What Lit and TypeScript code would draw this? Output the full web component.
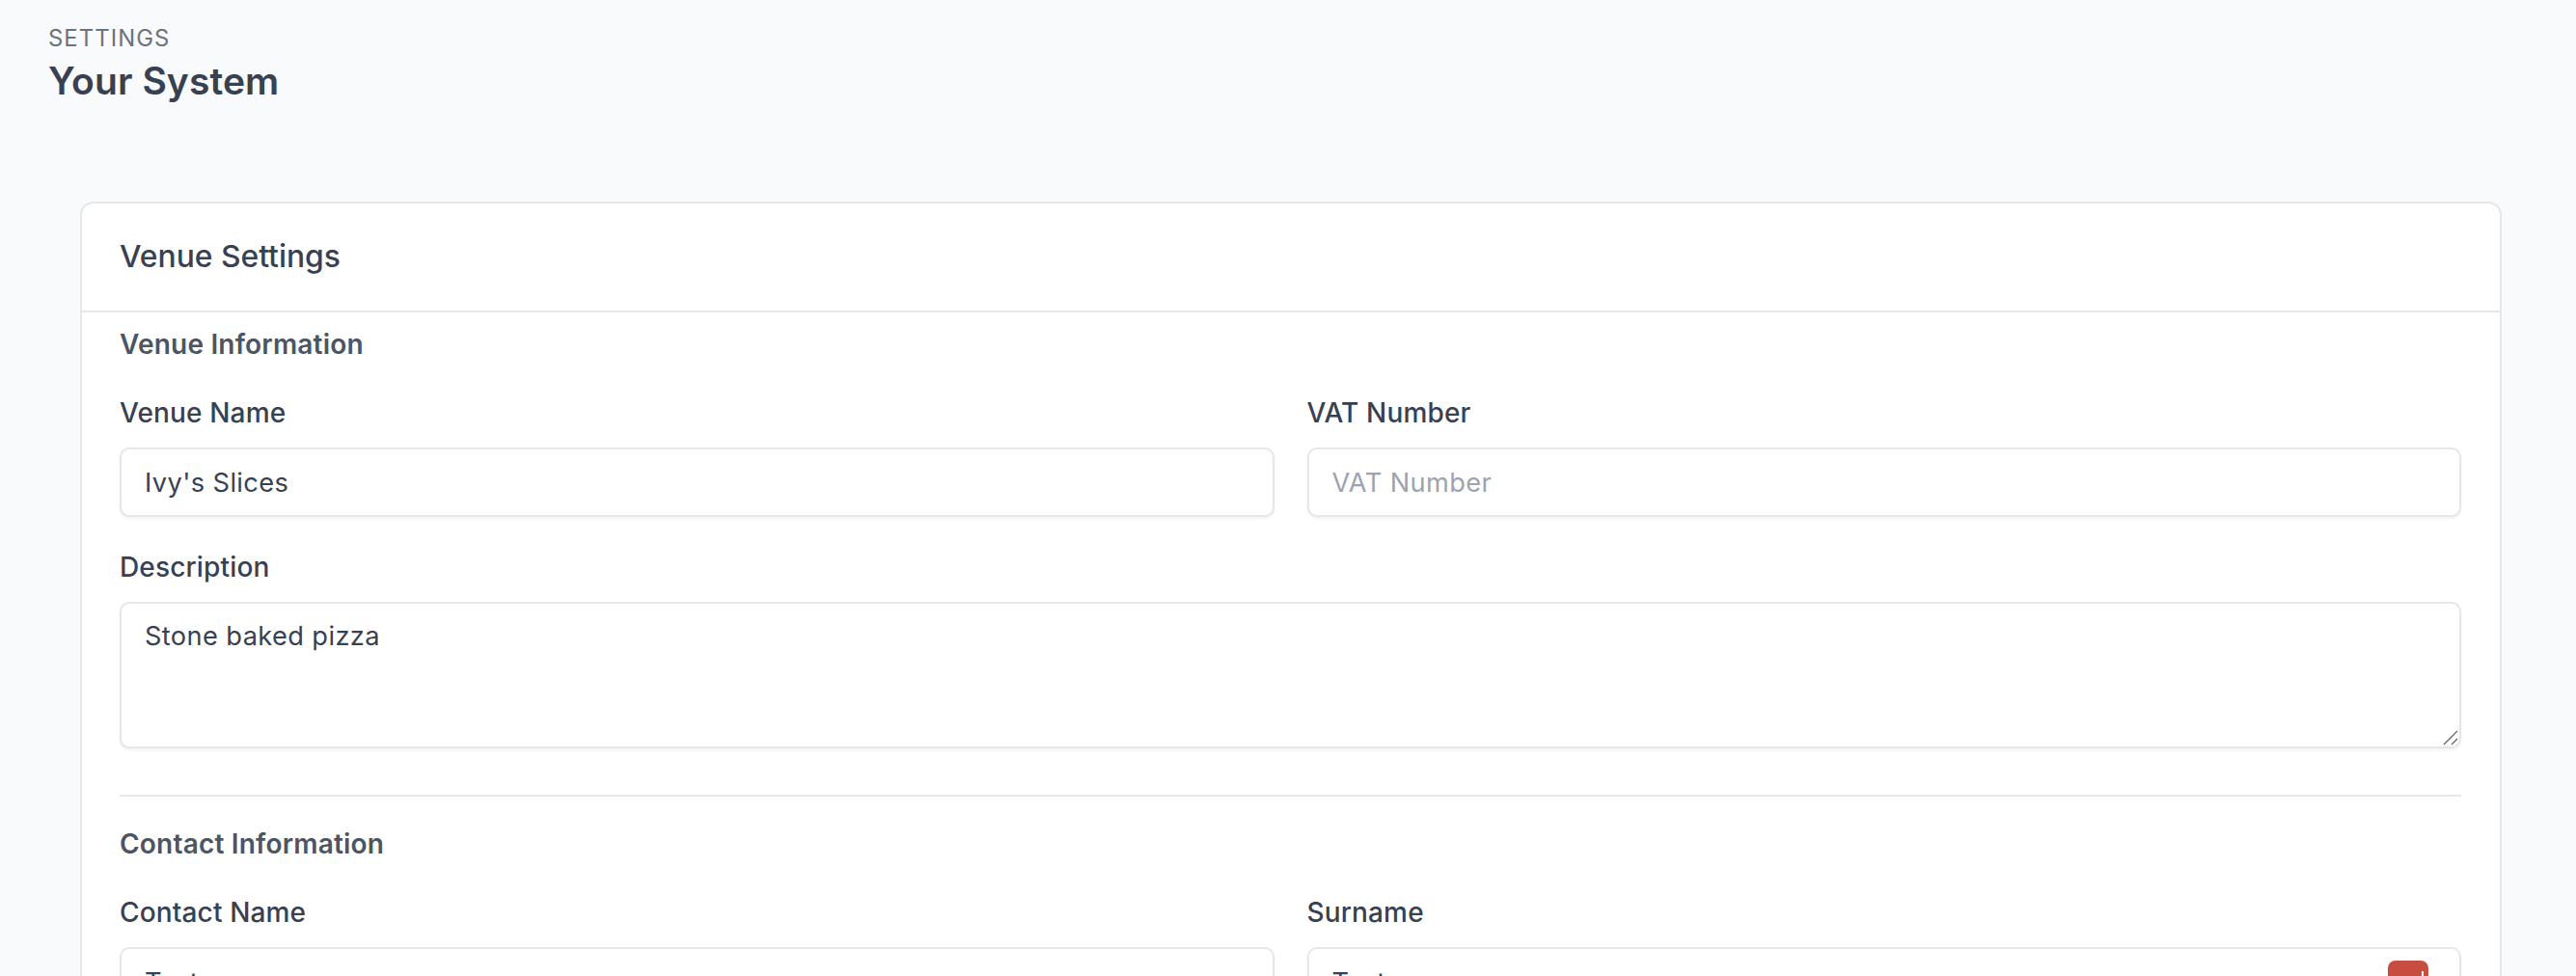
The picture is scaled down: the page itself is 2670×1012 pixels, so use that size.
import { LitElement, html, css } from "lit";
import { customElement } from "lit/decorators.js";

@customElement("app-root")
export class AppRoot extends LitElement {
  static styles = css`
    :host {
      display: block;
      height: 1012px;
      overflow: hidden;
      background: #f9fafb;
      font-family: Inter, "Liberation Sans", sans-serif;
      color: #374151;
    }
    .page-head { padding: 25px 50px 0; height: 209px; box-sizing: border-box; }
    .eyebrow { font-size: 23.8px; line-height: 30px; color: #6b7280; letter-spacing: 1.1px; text-transform: uppercase; }
    h1 { margin: 3px 0 0; font-size: 39px; line-height: 51px; font-weight: 600; letter-spacing: 0.1px; color: #374151; }
    .card {
      margin: 0 77px 0 83px;
      background: #fff;
      border: 2px solid #e5e7eb;
      border-radius: 14px;
    }
    .card-head {
      height: 113px;
      box-sizing: border-box;
      padding: 0 39px 2px;
      display: flex;
      align-items: center;
      border-bottom: 2px solid #e5e7eb;
      font-size: 31.8px;
      font-weight: 500;
    }
    .body { padding: 16px 40px 40px 39px; }
    h2 { margin: 0; font-size: 28px; line-height: 34px; font-weight: 600; letter-spacing: 0.2px; color: #4b5563; }
    .row { display: grid; grid-template-columns: 1fr 1fr; gap: 34px; margin-top: 37px; }
    .field { display: block; min-width: 0; }
    .full { margin-top: 35px; }
    .label { display: block; font-size: 28px; line-height: 34px; font-weight: 500; letter-spacing: 0.15px; color: #374151; margin-bottom: 19px; }
    .input {
      box-sizing: border-box;
      height: 72px;
      border: 2px solid #e5e7eb;
      border-radius: 10px;
      box-shadow: 0 2px 3px rgba(0,0,0,0.06);
      padding: 1px 24px 0;
      display: flex;
      align-items: center;
      font-size: 27.2px;
      letter-spacing: 0.4px;
      background: #fff;
    }
    .placeholder { color: #9ca3af; }
    .area { height: 152px; align-items: flex-start; padding-top: 17px; position: relative; }
    .grip { position: absolute; right: 1px; bottom: 1px; width: 16px; height: 16px; }
    hr { border: 0; height: 2px; background: #e5e7eb; margin: 48px 0 32px; }
    .rel { position: relative; }
    .badge { position: absolute; right: 32px; top: 12px; width: 42px; height: 42px; border-radius: 8px; background: #c64d3f; }
    .badge::after { content: ""; position: absolute; right: 5px; top: 11px; width: 2px; height: 12px; background: #fff; }
  `;

  private field(label: string, value: string, placeholder = false, badge = false) {
    return html`<label class="field">
      <span class="label">${label}</span>
      <div class="input rel ${placeholder ? "placeholder" : ""}">${value}${badge ? html`<span class="badge"></span>` : ""}</div>
    </label>`;
  }

  render() {
    return html`
      <div class="page-head">
        <div class="eyebrow">Settings</div>
        <h1>Your System</h1>
      </div>
      <section class="card">
        <div class="card-head">Venue Settings</div>
        <div class="body">
          <h2>Venue Information</h2>
          <div class="row">
            ${this.field("Venue Name", "Ivy's Slices")}
            ${this.field("VAT Number", "VAT Number", true)}
          </div>
          <label class="field full">
            <span class="label">Description</span>
            <div class="input area">Stone baked pizza
              <svg class="grip" viewBox="0 0 16 16" fill="none" stroke="#666" stroke-width="1.3">
                <path d="M1 15 15 1M9 15l6-6" />
              </svg>
            </div>
          </label>
          <hr />
          <h2>Contact Information</h2>
          <div class="row">
            ${this.field("Contact Name", "Test")}
            ${this.field("Surname", "Test", false, true)}
          </div>
        </div>
      </section>
    `;
  }
}
